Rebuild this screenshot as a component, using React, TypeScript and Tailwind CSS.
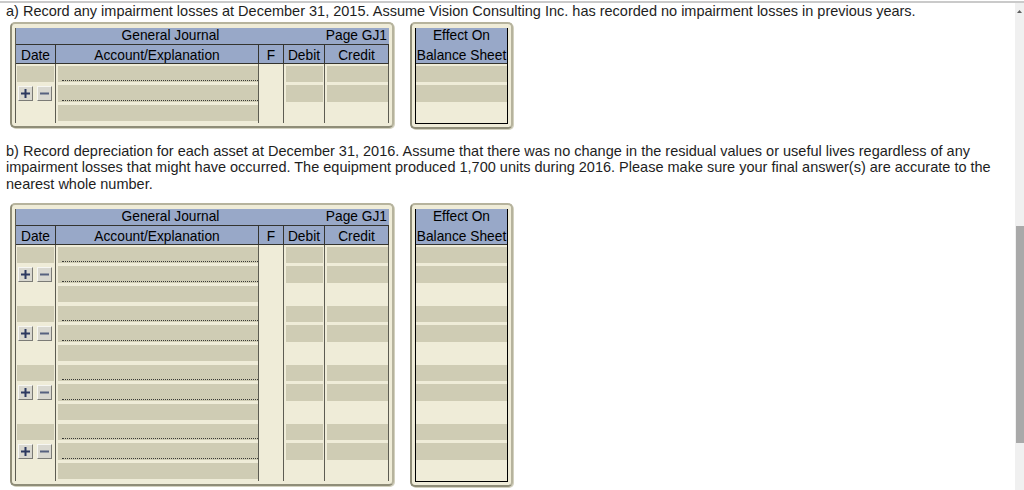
import React from 'react';

type RowSpec = {
  h: string;
  g: string;
  date: 'gray' | 'btn' | 'none';
  dotted: boolean;
  amt: boolean;
};

const GROUP: RowSpec[] = [
  { h: 'h-[19px]', g: 'h-[16px]', date: 'gray', dotted: true, amt: true },
  { h: 'h-[20px]', g: 'h-[17px]', date: 'btn', dotted: true, amt: true },
  { h: 'h-[20px]', g: 'h-[16px]', date: 'none', dotted: false, amt: false },
];

const line = 'shrink-0 border-r border-[#5d5c52]';

function Btn({ minus }: { minus?: boolean }) {
  return (
    <span className="flex h-[15px] w-[15px] items-center justify-center border border-t-[#f6f6f2] border-l-[#f6f6f2] border-b-[#7b7b76] border-r-[#7b7b76] bg-[#d9d8d0]">
      <svg width="9" height="9" viewBox="0 0 9 9">
        <rect x="0" y="3.5" width="9" height="2" fill={minus ? '#56617f' : '#2c3960'} />
        {!minus && <rect x="3.5" y="0" width="2" height="9" fill="#2c3960" />}
      </svg>
    </span>
  );
}

function Gray({ h, dotted }: { h: string; dotted?: boolean }) {
  return (
    <div className={`${h} flex flex-col justify-end bg-[#cfccb4] pb-[1px] pl-[4px]`}>
      {dotted && <div className="h-0 border-t border-dotted border-[#3a3a36]" />}
    </div>
  );
}

function JournalRow({ r }: { r: RowSpec }) {
  return (
    <div className={`flex ${r.h}`}>
      <div className={`${line} w-[40px] px-[1px] pt-[2px]`}>
        {r.date === 'gray' && <Gray h={r.g} />}
        {r.date === 'btn' && (
          <div className="flex gap-[4px] pl-[1px] pt-[1px]">
            <Btn />
            <Btn minus />
          </div>
        )}
      </div>
      <div className={`${line} w-[203px] pl-[2px] pt-[2px]`}>
        <Gray h={r.g} dotted={r.dotted} />
      </div>
      <div className={`${line} w-[25px]`} />
      <div className={`${line} w-[41px] pl-[2px] pr-[1px] pt-[2px]`}>
        {r.amt && <Gray h={r.g} />}
      </div>
      <div className={`${line} w-[64px] pl-[2px] pt-[2px]`}>
        {r.amt && <Gray h={r.g} />}
      </div>
    </div>
  );
}

function Frame({ children }: { children: React.ReactNode }) {
  return (
    <div className="rounded-[5px] border-2 border-[#b6b39d] border-l-[#8f8d78] border-b-[#8f8d78] bg-[#efecd8] px-[3px] pb-[3px] pt-[4px] shadow-[1px_1px_0_#d3d1bf]">
      {children}
    </div>
  );
}

function Entry({ groups }: { groups: number }) {
  const rows = Array.from({ length: groups }).flatMap(() => GROUP);
  return (
    <div className="ml-[4px] flex items-start gap-[16px] text-[13.75px] text-black">
      <Frame>
        <div className="border-l border-[#5d5c52]">
          <div className="flex h-[17px] border-b border-[#34342f] bg-[#98a8c8] leading-[16px]">
            <div className="w-[309px] text-center">General Journal</div>
            <div className="w-[64px] pr-[2px] text-right">Page GJ1</div>
          </div>
          <div className="flex h-[19px] border-b border-[#34342f] bg-[#98a8c8] text-center leading-[21px]">
            <div className="w-[40px] border-r border-[#34342f]">Date</div>
            <div className="w-[203px] border-r border-[#34342f]">Account/Explanation</div>
            <div className="w-[25px] border-r border-[#34342f]">F</div>
            <div className="w-[41px] border-r border-[#34342f]">Debit</div>
            <div className="w-[64px] border-r border-[#34342f]">Credit</div>
          </div>
          {rows.map((r, i) => (
            <JournalRow key={i} r={r} />
          ))}
        </div>
      </Frame>
      <Frame>
        <div className="w-[93px] border-x border-b border-black">
          <div className="border-b border-[#34342f] bg-[#98a8c8] text-center whitespace-nowrap">
            <div className="h-[17px] leading-[16px]">Effect On</div>
            <div className="h-[18px] leading-[21px]">Balance Sheet</div>
          </div>
          {rows.map((r, i) => (
            <div key={i} className={`${r.h} pt-[2px]`}>
              {r.amt && <div className={`${r.g} bg-[#cfccb4]`} />}
            </div>
          ))}
        </div>
      </Frame>
    </div>
  );
}

export default function App() {
  return (
    <div className="flex h-[490px] flex-col overflow-hidden bg-white font-['Liberation_Sans',Arial,sans-serif] text-[14.5px] text-[#1e1e1e]">
      <div className="mt-px h-[2px] shrink-0 bg-[#cacaca]" />
      <div className="flex min-h-0 flex-1">
        <main className="min-w-0 flex-1 pl-[6px] leading-[16.67px]">
          <p>
            a) Record any impairment losses at December 31, 2015. Assume Vision Consulting Inc. has
            recorded no impairment losses in previous years.
          </p>
          <div className="mt-[2px]">
            <Entry groups={1} />
          </div>
          <p className="mt-[14px] whitespace-nowrap">
            b) Record depreciation for each asset at December 31, 2016. Assume that there was no change
            in the residual values or useful lives regardless of any
            <br />
            impairment losses that might have occurred. The equipment produced 1,700 units during 2016.
            Please make sure your final answer(s) are accurate to the
            <br />
            nearest whole number.
          </p>
          <div className="mt-[10px]">
            <Entry groups={4} />
          </div>
        </main>
        <div className="flex w-[9px] shrink-0 flex-col bg-[#f0f0f0]">
          <div className="flex h-[10px] items-end justify-center">
            <svg width="5" height="3" viewBox="0 0 5 3">
              <path d="M0 3 L2.5 0 L5 3 Z" fill="#5f5f5f" />
            </svg>
          </div>
          <div className="ml-[1px] mt-[213px] h-[217px] w-[8px] bg-[#a9a9a9]" />
        </div>
      </div>
    </div>
  );
}
